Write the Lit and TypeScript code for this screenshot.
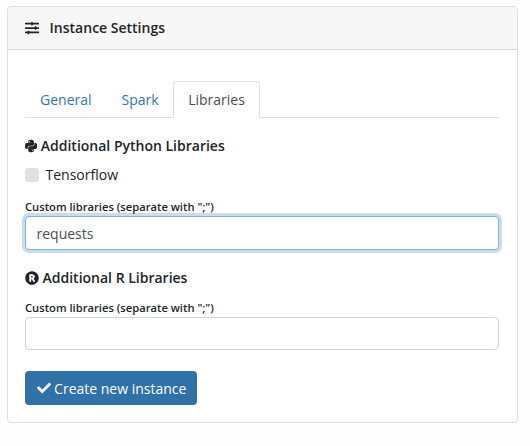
import { LitElement, html, css } from "lit";
import { customElement } from "lit/decorators.js";

@customElement("app-root")
export class AppRoot extends LitElement {
  static styles = css`
    :host {
      display: block;
      box-sizing: border-box;
      height: 446px;
      padding: 6px 12px 0 7px;
      background: #fefefe;
      font: 14px/21px "Open Sans", sans-serif;
      color: #212529;
    }
    * { box-sizing: border-box; }
    svg { display: block; fill: currentColor; flex: none; }
    .card {
      height: 417px;
      border: 1px solid #dfdfdf;
      border-radius: 4px;
      background: #fff;
    }
    .header {
      display: flex;
      align-items: center;
      height: 43px;
      padding: 0 17px 1px;
      gap: 10.6px;
      background: #f7f7f7;
      border-bottom: 1px solid #dadada;
      border-radius: 3px 3px 0 0;
      font-weight: 600;
    }
    .body { padding: 31px 18px 0 17px; }
    .tabs {
      display: flex;
      height: 37px;
      border-bottom: 1px solid #dee2e6;
    }
    .tab {
      height: 37px;
      padding: 7px 14px 0;
      border: 1px solid transparent;
      border-radius: 4px 4px 0 0;
      color: #2f76b5;
    }
    .tab.active {
      margin-left: -1px;
      padding-left: 14.5px;
      color: #495057;
      background: #fff;
      border-color: #dee2e6 #dee2e6 #fff;
    }
    .title {
      display: flex;
      align-items: center;
      gap: 3.5px;
      height: 21px;
      font-weight: 600;
    }
    .python { margin-top: 17px; }
    .r { margin-top: 17px; }
    .check {
      display: flex;
      align-items: center;
      gap: 6.5px;
      height: 21px;
      margin-top: 8px;
    }
    .box { width: 14px; height: 14px; border-radius: 3px; background: #dee2e6; }
    .label {
      height: 18px;
      margin-top: 13px;
      font-size: 11.2px;
      line-height: 17px;
      font-weight: 600;
    }
    .r + .label { height: 18px; margin-top: 11px; line-height: 17px; }
    .input {
      display: block;
      width: 100%;
      height: 33px;
      margin: 0;
      padding: 0 10.5px;
      border: 1px solid #ced4da;
      border-radius: 4px;
      outline: none;
      background: #fff;
      color: #495057;
      font: inherit;
    }
    .input.focused {
      height: 34px;
      border-color: #7eb1dd;
      box-shadow: 0 0 0 3px #cbdcea;
    }
    .button {
      display: flex;
      align-items: center;
      gap: 3.6px;
      width: 172px;
      height: 34px;
      margin: 21px 0 0;
      padding: 0 11.5px;
      border: 0;
      border-radius: 4px;
      background: #2f71a9;
      color: #fff;
      font: inherit;
      white-space: nowrap;
    }
  `;

  render() {
    return html`
      <div class="card">
        <div class="header">
          <svg width="14" height="14" viewBox="0 0 512 512">
            <path d="M496 384H160v-16c0-8.800-7.200-16-16-16h-32c-8.800 0-16 7.200-16 16v16H16c-8.800 0-16 7.200-16 16v32c0 8.800 7.200 16 16 16h80v16c0 8.800 7.200 16 16 16h32c8.800 0 16-7.200 16-16v-16h336c8.800 0 16-7.200 16-16v-32c0-8.800-7.200-16-16-16zm0-160h-80v-16c0-8.800-7.200-16-16-16h-32c-8.800 0-16 7.200-16 16v16H16c-8.800 0-16 7.200-16 16v32c0 8.800 7.200 16 16 16h336v16c0 8.800 7.200 16 16 16h32c8.800 0 16-7.200 16-16v-16h80c8.800 0 16-7.200 16-16v-32c0-8.800-7.200-16-16-16zm0-160H288V48c0-8.800-7.200-16-16-16h-32c-8.800 0-16 7.200-16 16v16H16C7.200 64 0 71.200 0 80v32c0 8.800 7.200 16 16 16h208v16c0 8.800 7.200 16 16 16h32c8.800 0 16-7.200 16-16v-16h208c8.800 0 16-7.200 16-16V80c0-8.800-7.200-16-16-16z"/>
          </svg>
          <span>Instance Settings</span>
        </div>
        <div class="body">
          <div class="tabs">
            <div class="tab">General</div>
            <div class="tab">Spark</div>
            <div class="tab active">Libraries</div>
          </div>
          <div class="title python">
            <svg width="12.250" height="14" viewBox="0 0 448 512">
              <path d="M439.8 200.5c-7.7-30.9-22.3-54.2-53.4-54.2h-40.1v47.4c0 36.8-31.2 67.8-66.8 67.8H172.7c-29.2 0-53.4 25-53.4 54.3v101.8c0 29 25.2 46 53.4 54.3 33.8 9.9 66.3 11.7 106.8 0 26.9-7.8 53.4-23.5 53.4-54.3v-40.7H226.2v-13.6h160.2c31.1 0 42.6-21.7 53.4-54.2 11.2-33.5 10.7-65.7 0-108.6zM286.2 404c11.1 0 20.1 9.1 20.1 20.3 0 11.3-9 20.4-20.1 20.4-11 0-20.1-9.2-20.1-20.4.1-11.3 9.1-20.3 20.1-20.3zM167.8 248.1h106.8c29.7 0 53.4-24.5 53.4-54.3V91.9c0-29-24.4-50.7-53.4-55.6-35.8-5.9-74.7-5.6-106.8.1-45.2 8-53.4 24.7-53.4 55.6v40.7h106.9v13.6h-147c-31.1 0-58.3 18.7-66.8 54.2-9.8 40.7-10.2 66.1 0 108.6 7.6 31.6 25.7 54.2 56.8 54.2H101v-48.8c0-35.3 30.5-66.4 66.8-66.4zm-6.7-142.6c-11.1 0-20.1-9.1-20.1-20.3.1-11.3 9-20.4 20.1-20.4 11 0 20.1 9.2 20.1 20.4s-9 20.3-20.1 20.3z"/>
            </svg>
            <span>Additional Python Libraries</span>
          </div>
          <div class="check"><span class="box"></span><span>Tensorflow</span></div>
          <div class="label">Custom libraries (separate with ";")</div>
          <input class="input focused" .value=${"requests"} />
          <div class="title r">
            <svg width="14" height="14" viewBox="0 0 512 512">
              <path d="M285.363 207.475c0 18.6-9.831 28.431-28.431 28.431h-29.876v-56.14h23.378c28.668 0 34.929 8.773 34.929 27.709zM504 256c0 136.967-111.033 248-248 248S8 392.967 8 256 119.033 8 256 8s248 111.033 248 248zM363.411 360.414c-46.729-84.825-43.299-78.636-44.702-80.98 23.432-15.172 37.945-42.979 37.945-74.486 0-54.244-31.5-89.252-105.498-89.252h-70.667c-13.255 0-24 10.745-24 24V372c0 13.255 10.745 24 24 24h22.567c13.255 0 24-10.745 24-24v-71.663h25.556l44.129 82.937a24.001 24.001 0 0 0 21.188 12.727h24.464c18.261-.001 29.829-19.591 21.018-35.587z"/>
            </svg>
            <span>Additional R Libraries</span>
          </div>
          <div class="label">Custom libraries (separate with ";")</div>
          <input class="input" />
          <button class="button">
            <svg width="14" height="14" viewBox="0 0 512 512">
              <path d="M173.898 439.404l-166.4-166.4c-9.997-9.997-9.997-26.206 0-36.204l36.203-36.204c9.997-9.998 26.207-9.998 36.204 0L192 312.69 432.095 72.596c9.997-9.997 26.207-9.997 36.204 0l36.203 36.204c9.997 9.997 9.997 26.206 0 36.204l-294.4 294.401c-9.998 9.997-26.207 9.997-36.204-.001z"/>
            </svg>
            <span>Create new instance</span>
          </button>
        </div>
      </div>
    `;
  }
}
